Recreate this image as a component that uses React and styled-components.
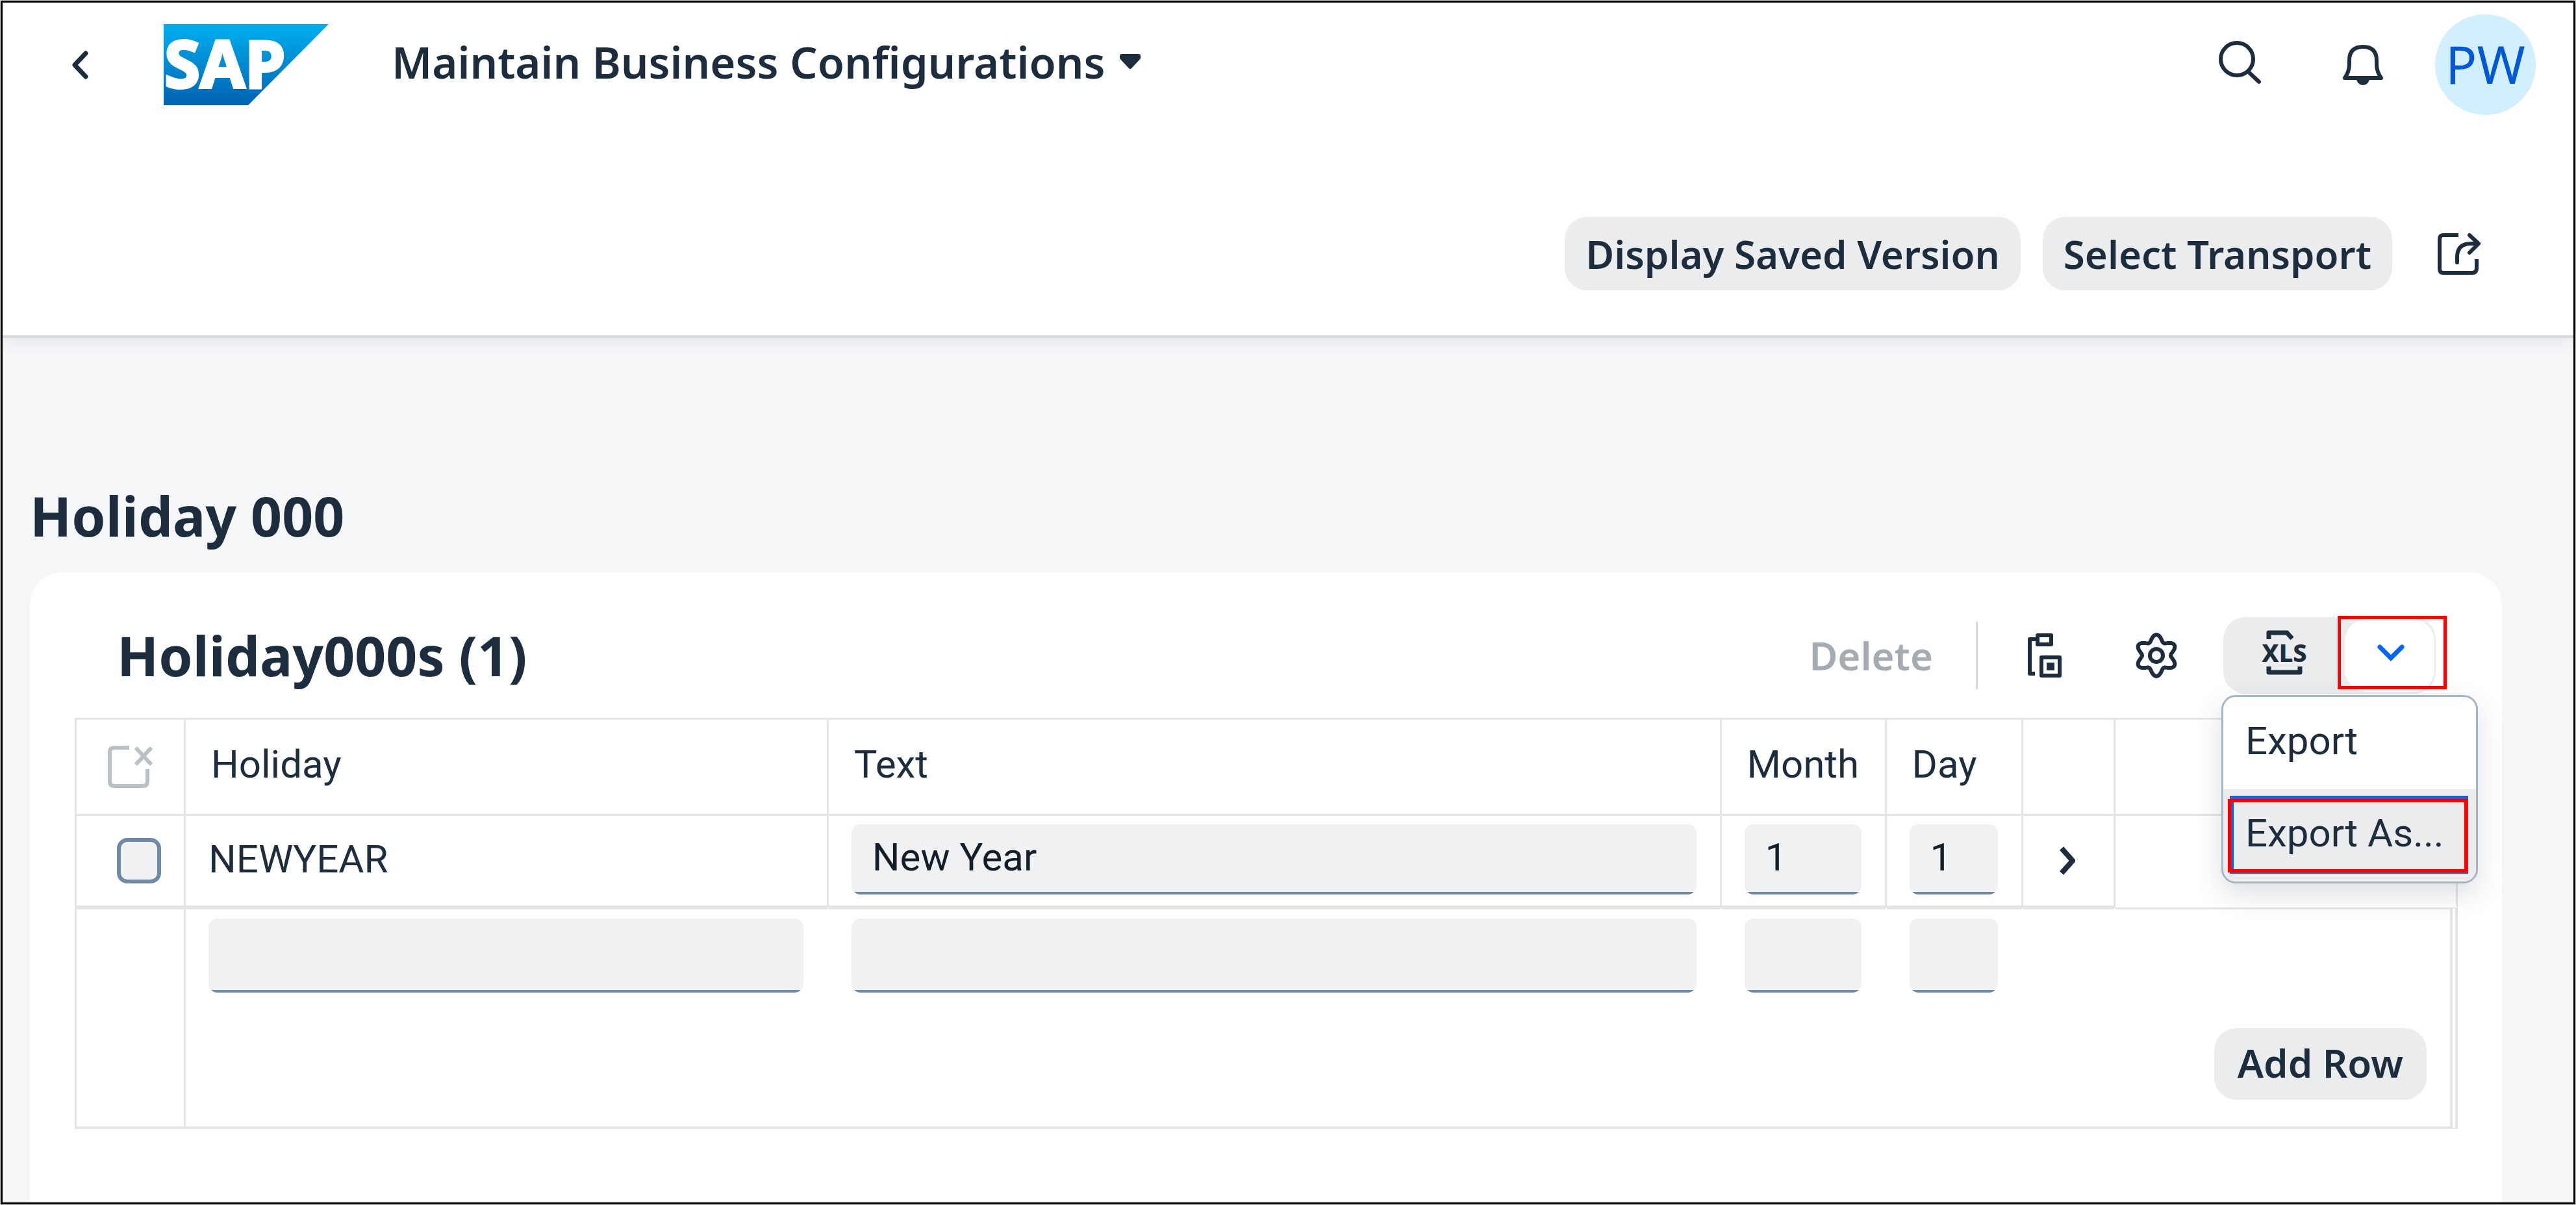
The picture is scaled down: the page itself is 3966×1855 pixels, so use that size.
import React from "react";
import styled, { createGlobalStyle, css } from "styled-components";

const ink = "#1d2d3e";
const line = "#e5e5e5";
const steel = "#7089a5";
const blue = "#0064f8";
const regular = `Roboto, "Liberation Sans", sans-serif`;
const strong = `"Noto Sans", "Open Sans", sans-serif`;

const GlobalStyle = createGlobalStyle`
  *, *::before, *::after { box-sizing: border-box; }
  body { margin: 0; color: ${ink}; font: 400 60px/72px ${regular}; background: #c9cfcd; }
  button, input { margin: 0; color: inherit; font: inherit; }
  button { border: 0; background: none; cursor: pointer; white-space: nowrap; }
  svg { display: block; }
`;

/* Frame and header */

const Screen = styled.div`
  min-height: 100vh;
  padding: 1px;
  display: flex;
`;

const Frame = styled.div`
  flex: 1;
  min-width: 0;
  display: flex;
  flex-direction: column;
  border: 3px solid #000;
  background: #f5f6f8;
`;

const Header = styled.header`
  background: #fff;
  border-bottom: 4px solid #d9d9d9;
  box-shadow: 0 6px 20px rgba(34, 53, 72, 0.08);
`;

const ShellBar = styled.div`
  display: flex;
  align-items: center;
  height: 191px;
  padding: 0 58px 0 50px;
`;

const LogoLink = styled.a`
  margin: 0 97px 0 60px;
`;

const LogoDrawing = styled.svg`
  overflow: visible;
`;

const TitleButton = styled.button`
  display: flex;
  align-items: center;
  gap: 20px;
  padding: 0 0 10px;
  font: 600 67px/80px ${strong};
`;

const ShellActions = styled.div`
  display: flex;
  align-items: center;
  gap: 52px;
  margin-left: auto;
`;

const Avatar = styled.button`
  width: 155px;
  height: 155px;
  margin-left: 42px;
  padding: 0 0 4px;
  border-radius: 50%;
  background: #d1efff;
  color: #0057d8;
  font: 400 80px/96px ${strong};
`;

const IconButton = styled.button`
  display: flex;
  align-items: center;
  justify-content: center;
  width: 138px;
  height: 113px;
  padding: 0;
`;

const PageActions = styled.div`
  display: flex;
  justify-content: flex-end;
  align-items: center;
  gap: 34px;
  padding: 139px 107px 69px;
`;

const TextButton = styled.button`
  height: 113px;
  padding: 0 32px;
  border-radius: 34px;
  background: #eaecee;
  font: 600 60px/72px ${strong};

  &:disabled {
    background: none;
    color: #a5abb2;
  }
`;

/* Content */

const Content = styled.main`
  flex: 1;
  display: flex;
  flex-direction: column;
  padding: 224px 110px 0 42px;
`;

const PageTitle = styled.h1`
  margin: 0 0 37px;
  font: 700 84px/100px ${strong};
`;

const Card = styled.section`
  flex: 1;
  padding: 69px 68px 0 69px;
  border-radius: 50px 50px 0 0;
  background: #fff;
`;

const Toolbar = styled.div`
  display: flex;
  align-items: center;
  gap: 34px;
  height: 118px;
  margin-bottom: 37px;
  padding: 0 34px 0 65px;
`;

const TableTitle = styled.h2`
  margin: 0 auto 0 0;
  font: 700 84px/100px ${strong};
`;

const Divider = styled.span`
  width: 3px;
  height: 104px;
  background: #d9d9d9;
`;

/* Export split button, its menu and the red call-outs */

const SplitButton = styled.div`
  position: relative;
  display: flex;
  align-items: center;
  width: 327px;
  height: 118px;
  border-radius: 34px;
  background: #eaecee;
`;

const ExportButton = styled(IconButton)`
  width: 187px;
  padding-bottom: 8px;
`;

const ArrowButton = styled(IconButton)`
  height: 112px;
  padding: 0 0 8px 4px;
  border-radius: 34px;
  background: #fff;
`;

const Callout = styled.span`
  position: absolute;
  z-index: 3;
  border: 5px solid #f00;
  pointer-events: none;
  ${(p) =>
    p.$target === "arrow"
      ? css`inset: -2px -17px 7px 176px;`
      : css`inset: 15px 13px 14px 7px;`}
`;

const Menu = styled.div`
  position: absolute;
  z-index: 2;
  top: 100%;
  left: -3px;
  width: 395px;
  margin-top: 2px;
  overflow: hidden;
  border: 3px solid #a6b4c3;
  border-radius: 22px;
  background: #fff;
  box-shadow: 0 16px 44px rgba(34, 53, 72, 0.16);
`;

const MenuItem = styled.button`
  position: relative;
  display: block;
  width: 100%;
  height: 142px;
  padding: 0 0 6px 34px;
  text-align: left;
  background: ${(p) => (p.$focused ? "#eaecee" : "#fff")};

  ${(p) =>
    p.$focused &&
    css`
      &::before {
        content: "";
        position: absolute;
        inset: 10px 12px 12px 10px;
        border: 6px solid ${blue};
      }
    `}
`;

/* Table */

const Table = styled.table`
  width: 100%;
  table-layout: fixed;
  border-spacing: 0;
  border-top: 3px solid ${line};
  border-left: 3px solid ${line};
`;

const Col = styled.col`
  width: ${(p) => p.$w};
`;

const HeadCell = styled.th`
  height: 148px;
  padding: 0 36px 8px 39px;
  border-right: 3px solid ${line};
  border-bottom: 3px solid ${line};
  font-weight: 400;
  text-align: left;
`;

const Cell = styled.td`
  height: 141px;
  padding: 0 36px 4px 35px;
  border-right: 3px solid ${line};
  border-bottom: 3px solid ${(p) => (p.$open ? "transparent" : line)};
`;

const SelectAllCell = styled(HeadCell)`
  padding: 0 0 0 48px;
`;

const SelectAllButton = styled.button`
  display: block;
  padding: 0;
`;

const CheckCell = styled(Cell)`
  padding: 0 0 0 62px;
`;

const NavCell = styled(Cell)`
  padding: 0;
`;

const EntryCell = styled.td`
  padding: 14px 36px 0 35px;
  border-top: 3px solid ${line};
  border-right: ${(p) => (p.$last ? `12px double ${line}` : "3px solid transparent")};
`;

const GutterCell = styled.td`
  border-top: 3px solid ${line};
  border-right: 3px solid ${line};
  border-bottom: 4px solid ${line};
`;

const AddCell = styled.td`
  padding: 55px 36px 41px;
  border-right: 12px double ${line};
  border-bottom: 4px solid ${line};
  text-align: right;
`;

const AddButton = styled(TextButton)`
  display: inline-block;
  height: 110px;
  padding: 0 36px 4px;
  vertical-align: top;
`;

const Field = styled.input`
  display: block;
  width: 100%;
  height: ${(p) => (p.$tall ? "114px" : "108px")};
  padding: 0 12px 8px 32px;
  border: 0;
  border-radius: 14px;
  outline: 0;
  color: #131e29;
  background: linear-gradient(${steel}, ${steel}) bottom / 100% 4px no-repeat #eff1f3;
`;

const CheckBox = styled.input`
  display: block;
  appearance: none;
  width: 68px;
  height: 70px;
  border: 6px solid ${steel};
  border-radius: 16px;
  background: #eff1f3;
`;

/* Icons */

const Icon = ({ w, h, color = ink, stroke = 6, children, ...rest }) => (
  <svg
    width={w}
    height={h}
    viewBox={`0 0 ${w} ${h}`}
    fill="none"
    stroke={color}
    strokeWidth={stroke}
    strokeLinejoin="round"
    aria-hidden="true"
    {...rest}
  >
    {children}
  </svg>
);

const BackIcon = () => (
  <Icon w={27} h={44} stroke={7} strokeLinecap="round">
    <path d="M22 4L5 22L22 40" />
  </Icon>
);

const ForwardIcon = () => (
  <Icon w={27} h={44} stroke={8}>
    <path d="M4 3L21 22L4 41" />
  </Icon>
);

const DropIcon = () => (
  <Icon w={36} h={26} stroke={6}>
    <path d="M5 4H31V7L18 21L5 7Z" fill={ink} />
  </Icon>
);

const ChevronDown = () => (
  <Icon w={44} h={28} stroke={7} color={blue} strokeLinecap="round">
    <path d="M5 5L22 22L39 5" strokeLinejoin="miter" />
  </Icon>
);

const SearchIcon = () => (
  <Icon w={67} h={75} strokeLinecap="round">
    <circle cx="29" cy="29" r="25" />
    <path d="M46 48L63 64" />
  </Icon>
);

const BellIcon = () => (
  <Icon w={64} h={64}>
    <path d="M4 52Q11 42 11 31V25Q11 4 32 4Q53 4 53 25V31Q53 42 60 52Z" />
    <path d="M22 55H42Q39 63 32 63Q25 63 22 55Z" fill={ink} stroke="none" />
  </Icon>
);

const ShareIcon = () => (
  <Icon w={68} h={66}>
    <path d="M33 4H10Q4 4 4 10V56Q4 62 10 62H54Q61 62 61 55V41" />
    <path d="M31 46V38Q31 17 52 17H62" strokeLinecap="round" />
    <path d="M50 4L64 17L50 31" strokeLinecap="round" />
  </Icon>
);

const PasteIcon = () => (
  <Icon w={54} h={70}>
    <path d="M14 10H4V63H12" />
    <path d="M16 4H37V18H16Z" />
    <path d="M22 38H50V66H22Z" />
    <path d="M30 46H42V58H30Z" fill={ink} stroke="none" />
  </Icon>
);

const gearPath =
  Array.from({ length: 96 }, (_, i) => {
    const a = (i / 96) * Math.PI * 2;
    const r = 27 + 5 * Math.cos(6 * a);
    return `${i ? "L" : "M"}${(33 + r * Math.sin(a)).toFixed(1)} ${(35 - r * Math.cos(a)).toFixed(1)}`;
  }).join("") + "Z";

const GearIcon = () => (
  <Icon w={66} h={70}>
    <path d={gearPath} />
    <circle cx="33" cy="35" r="10" />
  </Icon>
);

const XlsIcon = () => (
  <Icon w={70} h={70} stroke={7}>
    <path d="M11 14V4H39L47 13" />
    <path d="M11 56V65H59V56" />
    <text x="35" y="49" textAnchor="middle" fill={ink} stroke="none" fontFamily="Noto Sans" fontWeight="800" fontSize="38">
      XLS
    </text>
  </Icon>
);

const DeselectIcon = () => (
  <Icon w={70} h={66} color="#b9c0c6">
    <path d="M33 3H10Q3 3 3 10V55Q3 62 10 62H54Q61 62 61 55V36" />
    <path d="M43 3L67 29M67 3L43 29" />
  </Icon>
);

const SapLogo = () => (
  <LogoDrawing width="254" height="125" viewBox="0 0 254 125" role="img" aria-label="SAP">
    <defs>
      <linearGradient id="sap-blue" x1="0" y1="0" x2="0" y2="1">
        <stop offset="0" stopColor="#00b0f0" />
        <stop offset="1" stopColor="#0062b3" />
      </linearGradient>
    </defs>
    <path d="M0 0H254L130 125H0Z" fill="url(#sap-blue)" />
    <text x="1" y="98" fill="#fff" stroke="#fff" strokeWidth="4" fontFamily="Noto Sans" fontWeight="700" fontSize="100">
      SAP
    </text>
  </LogoDrawing>
);

const columns = [
  { key: "holiday", label: "Holiday", width: "27%" },
  { key: "text", label: "Text", width: "37.5%" },
  { key: "month", label: "Month", width: "254px" },
  { key: "day", label: "Day", width: "210px" },
];

const rows = [{ holiday: "NEWYEAR", text: "New Year", month: "1", day: "1" }];

export default function App() {
  return (
    <Screen>
      <GlobalStyle />
      <Frame>
        <Header>
          <ShellBar>
            <IconButton aria-label="Back"><BackIcon /></IconButton>
            <LogoLink href="#home"><SapLogo /></LogoLink>
            <TitleButton>
              Maintain Business Configurations
              <DropIcon />
            </TitleButton>
            <ShellActions>
              <IconButton aria-label="Search"><SearchIcon /></IconButton>
              <IconButton aria-label="Notifications"><BellIcon /></IconButton>
            </ShellActions>
            <Avatar>PW</Avatar>
          </ShellBar>
          <PageActions>
            <TextButton>Display Saved Version</TextButton>
            <TextButton>Select Transport</TextButton>
            <IconButton aria-label="Share"><ShareIcon /></IconButton>
          </PageActions>
        </Header>

        <Content>
          <PageTitle>Holiday 000</PageTitle>
          <Card>
            <Toolbar>
              <TableTitle>Holiday000s (1)</TableTitle>
              <TextButton disabled>Delete</TextButton>
              <Divider />
              <IconButton aria-label="Paste"><PasteIcon /></IconButton>
              <IconButton aria-label="Settings"><GearIcon /></IconButton>
              <SplitButton>
                <ExportButton aria-label="Export to spreadsheet"><XlsIcon /></ExportButton>
                <ArrowButton aria-label="Export options" aria-expanded="true"><ChevronDown /></ArrowButton>
                <Callout $target="arrow" />
                <Menu role="menu">
                  <MenuItem role="menuitem">Export</MenuItem>
                  <MenuItem role="menuitem" $focused>
                    Export As...
                    <Callout $target="item" />
                  </MenuItem>
                </Menu>
              </SplitButton>
            </Toolbar>

            <Table>
              <colgroup>
                <Col $w="168px" />
                {columns.map((c) => <Col key={c.key} $w={c.width} />)}
                <Col $w="142px" />
                <Col />
              </colgroup>
              <thead>
                <tr>
                  <SelectAllCell>
                    <SelectAllButton aria-label="Deselect all"><DeselectIcon /></SelectAllButton>
                  </SelectAllCell>
                  {columns.map((c) => <HeadCell key={c.key} scope="col">{c.label}</HeadCell>)}
                  <HeadCell />
                  <HeadCell />
                </tr>
              </thead>
              <tbody>
                {rows.map((row) => (
                  <tr key={row.holiday}>
                    <CheckCell><CheckBox type="checkbox" aria-label={`Select ${row.holiday}`} /></CheckCell>
                    <Cell>{row.holiday}</Cell>
                    {columns.slice(1).map((c) => (
                      <Cell key={c.key}><Field aria-label={c.label} defaultValue={row[c.key]} /></Cell>
                    ))}
                    <NavCell><IconButton aria-label="Open details"><ForwardIcon /></IconButton></NavCell>
                    <Cell $open />
                  </tr>
                ))}
                <tr>
                  <GutterCell rowSpan={2} />
                  {columns.map((c) => (
                    <EntryCell key={c.key}><Field $tall aria-label={`New ${c.label}`} /></EntryCell>
                  ))}
                  <EntryCell />
                  <EntryCell $last />
                </tr>
                <tr>
                  <AddCell colSpan={6}><AddButton>Add Row</AddButton></AddCell>
                </tr>
              </tbody>
            </Table>
          </Card>
        </Content>
      </Frame>
    </Screen>
  );
}
